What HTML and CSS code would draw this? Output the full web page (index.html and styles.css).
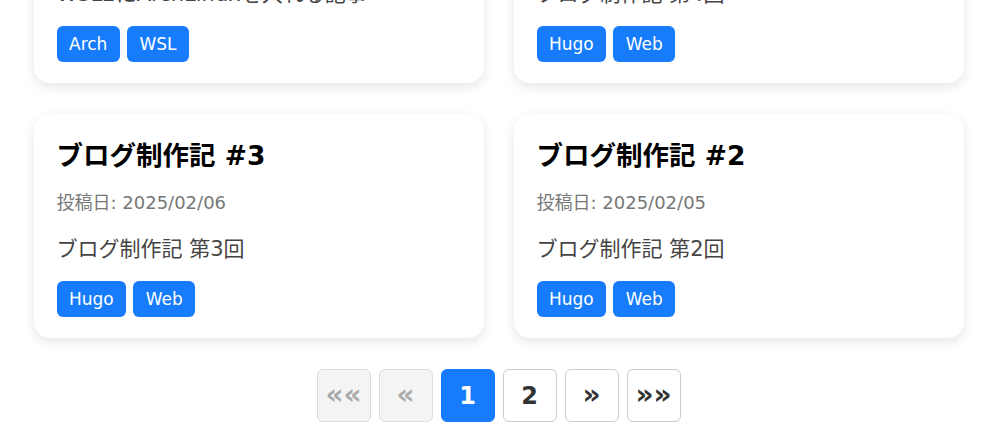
FILE: index.html
```html
<!DOCTYPE html>
<html lang="ja">
<head>
<meta charset="utf-8">
<title>ブログ</title>
<link rel="stylesheet" href="styles.css">
</head>
<body>
<header class="site-header">
  <h1 class="site-title">ブログ</h1>
</header>
<main class="container">
  <div class="grid">
    <article class="card">
      <h2 class="card-title">WSLにArch Linuxを入れる</h2>
      <p class="card-meta">投稿日: 2025/02/07</p>
      <p class="card-desc">WSL2にArchLinuxを入れる記事</p>
      <div class="tags"><span class="tag">Arch</span><span class="tag">WSL</span></div>
    </article>
    <article class="card">
      <h2 class="card-title">ブログ制作記 #4</h2>
      <p class="card-meta">投稿日: 2025/02/07</p>
      <p class="card-desc">ブログ制作記 第4回</p>
      <div class="tags"><span class="tag">Hugo</span><span class="tag">Web</span></div>
    </article>
    <article class="card target">
      <h2 class="card-title">ブログ制作記 #3</h2>
      <p class="card-meta">投稿日: 2025/02/06</p>
      <p class="card-desc">ブログ制作記 第3回</p>
      <div class="tags"><span class="tag">Hugo</span><span class="tag">Web</span></div>
    </article>
    <article class="card">
      <h2 class="card-title">ブログ制作記 #2</h2>
      <p class="card-meta">投稿日: 2025/02/05</p>
      <p class="card-desc">ブログ制作記 第2回</p>
      <div class="tags"><span class="tag">Hugo</span><span class="tag">Web</span></div>
    </article>
  </div>
  <nav class="pagination">
    <span class="page disabled chev">««</span>
    <span class="page disabled chev">«</span>
    <span class="page active">1</span>
    <a class="page" href="#">2</a>
    <a class="page chev" href="#">»</a>
    <a class="page chev" href="#">»»</a>
  </nav>
</main>
<script src="script.js"></script>
</body>
</html>
```

FILE: styles.css
```css
html, body {
  margin: 0;
  padding: 0;
  background: #ffffff;
}
body {
  font-family: "DejaVu Sans", "Noto Sans CJK JP", sans-serif;
  color: #333;
}
.site-header {
  padding: 40px 0 20px;
  text-align: center;
}
.site-title {
  margin: 0;
  font-size: 32px;
}
.container {
  max-width: 930px;
  margin: 0 auto;
  padding: 0 0 40px;
}
.grid {
  display: grid;
  grid-template-columns: 1fr 1fr;
  gap: 31px 30px;
}
.card {
  background: #fff;
  border-radius: 16px;
  box-shadow: 0 4px 12px rgba(0, 0, 0, 0.1);
  padding: 24px 23px 21px;
}
.card-title {
  margin: 0;
  font-size: 26.5px;
  line-height: 36px;
  font-weight: bold;
  color: #000;
}
.card-meta {
  margin: 16px 0 0;
  font-size: 18px;
  line-height: 26px;
  color: #777;
}
.card-desc {
  margin: 18px 0 0;
  font-size: 21px;
  line-height: 31px;
  color: #444;
}
.tags {
  display: flex;
  gap: 7px;
  margin-top: 16px;
}
.tag {
  display: inline-block;
  background: #167cfb;
  color: #fff;
  font-size: 17px;
  line-height: 36px;
  height: 36px;
  padding: 0 12.5px;
  border-radius: 6px;
}
.pagination {
  display: flex;
  justify-content: center;
  gap: 8px;
  margin-top: 31px;
}
.page {
  box-sizing: border-box;
  width: 54px;
  height: 53px;
  display: flex;
  align-items: center;
  justify-content: center;
  border: 1px solid #cccccc;
  border-radius: 6px;
  background: #fff;
  color: #333;
  font-size: 24px;
  font-weight: bold;
  text-decoration: none;
}
.page.chev {
  font-size: 28px;
  padding-bottom: 3px;
}
.page.disabled {
  background: #f4f4f4;
  border-color: #dddddd;
  color: #aaaaaa;
}
.page.active {
  background: #167cfb;
  border-color: #167cfb;
  color: #fff;
}
```

FILE: script.js
```js
(function () {
  var t = document.querySelector('.target');
  var y = t.getBoundingClientRect().top + window.scrollY - 114;
  window.scrollTo(0, y);
})();
```
